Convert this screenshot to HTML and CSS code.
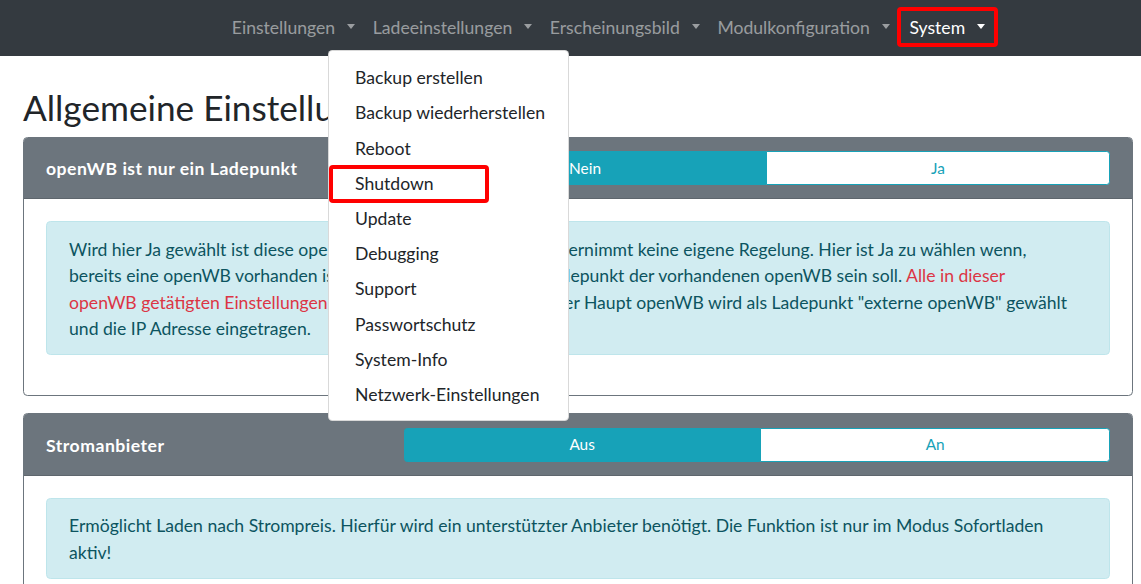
FILE: index.html
```html
<!DOCTYPE html>
<html lang="de">
<head>
<meta charset="utf-8">
<title>openWB Einstellungen</title>
<link rel="stylesheet" href="styles.css">
</head>
<body>
<nav class="navbar">
  <ul class="nav">
    <li class="nav-item"><a class="nav-link">Einstellungen <span class="caret"></span></a></li>
    <li class="nav-item"><a class="nav-link">Ladeeinstellungen <span class="caret"></span></a></li>
    <li class="nav-item"><a class="nav-link">Erscheinungsbild <span class="caret"></span></a></li>
    <li class="nav-item"><a class="nav-link">Modulkonfiguration <span class="caret"></span></a></li>
    <li class="nav-item"><a class="nav-link active">System <span class="caret"></span><span class="mark mark-system"></span></a></li>
  </ul>
  <div class="dropdown-menu">
    <a class="dropdown-item">Backup erstellen</a>
    <a class="dropdown-item">Backup wiederherstellen</a>
    <a class="dropdown-item">Reboot</a>
    <a class="dropdown-item">Shutdown<span class="mark mark-shutdown"></span></a>
    <a class="dropdown-item">Update</a>
    <a class="dropdown-item">Debugging</a>
    <a class="dropdown-item">Support</a>
    <a class="dropdown-item">Passwortschutz</a>
    <a class="dropdown-item">System-Info</a>
    <a class="dropdown-item">Netzwerk-Einstellungen</a>
  </div>
</nav>
<main class="container">
  <h2 class="page-title">Allgemeine Einstellungen</h2>
  <section class="card">
    <div class="card-header">
      <div class="card-title">openWB ist nur ein Ladepunkt</div>
      <div class="btn-group">
        <button class="btn btn-on">Nein</button>
        <button class="btn btn-off">Ja</button>
      </div>
    </div>
    <div class="card-body">
      <div class="alert">Wird hier Ja gewählt ist diese openWB nur ein Ladepunkt und übernimmt keine eigene Regelung. Hier ist Ja zu wählen wenn,<br>bereits eine openWB vorhanden ist und diese nur ein zweiter Ladepunkt der vorhandenen openWB sein soll. <span class="danger">Alle in dieser<br>openWB getätigten Einstellungen werden NICHT beachtet.</span> An der Haupt openWB wird als Ladepunkt "externe openWB" gewählt<br>und die IP Adresse eingetragen.</div>
    </div>
  </section>
  <section class="card">
    <div class="card-header">
      <div class="card-title">Stromanbieter</div>
      <div class="btn-group">
        <button class="btn btn-on">Aus</button>
        <button class="btn btn-off">An</button>
      </div>
    </div>
    <div class="card-body">
      <div class="alert">Ermöglicht Laden nach Strompreis. Hierfür wird ein unterstützter Anbieter benötigt. Die Funktion ist nur im Modus Sofortladen<br>aktiv!</div>
    </div>
  </section>
</main>
</body>
</html>
```
FILE: styles.css
```css
html, body {
  margin: 0;
  padding: 0;
}
body {
  font-family: "Lato", "Noto Sans", sans-serif;
  font-size: 17.6px;
  line-height: 26.4px;
  color: #212529;
  background: #fff;
  overflow: hidden;
}
.navbar {
  position: relative;
  height: 56px;
  background: #343a40;
  display: flex;
  align-items: center;
  z-index: 10;
}
.nav {
  list-style: none;
  margin: 0;
  padding: 0 0 0 223px;
  display: flex;
  align-items: center;
}
.nav-link {
  position: relative;
  display: block;
  padding: 0 8.8px;
  color: rgba(255, 255, 255, 0.5);
  white-space: nowrap;
}
.nav-link.active {
  color: #fff;
  margin-left: 2px;
}
.caret {
  display: inline-block;
  margin-left: 7.5px;
  vertical-align: 4.5px;
  border-top: 5px solid;
  border-left: 4.6px solid transparent;
  border-right: 4.6px solid transparent;
}
.mark {
  position: absolute;
  border: 4px solid #ff0000;
  border-radius: 4px;
  box-sizing: border-box;
  pointer-events: none;
}
.mark-system {
  left: -4px;
  top: -8px;
  width: 101px;
  height: 40px;
}
.mark-shutdown {
  left: 0;
  top: -1px;
  width: 160px;
  height: 38px;
}
.dropdown-menu {
  position: absolute;
  left: 328px;
  top: 50px;
  width: 241px;
  box-sizing: border-box;
  padding: 9.8px 0 7.8px;
  background: #fff;
  border: 1px solid rgba(0, 0, 0, 0.15);
  border-radius: 4.4px;
}
.dropdown-item {
  position: relative;
  display: block;
  padding: 4.4px 26.4px 4.4px 26px;
  color: #212529;
  white-space: nowrap;
}
.container {
  padding: 0 8px 0 23px;
}
.page-title {
  margin: 30px 0 8.8px;
  font-size: 35.2px;
  line-height: 42.2px;
  font-weight: 400;
  white-space: nowrap;
}
.card {
  border: 1px solid #6c757d;
  border-radius: 4.4px;
  margin-bottom: 17.6px;
  overflow: hidden;
}
.card-header {
  display: flex;
  align-items: center;
  background: #6c757d;
  padding: 13.2px 22px;
  border-bottom: 1px solid rgba(0, 0, 0, 0.125);
}
.card-title {
  flex: 0 0 358px;
  padding-top: 3px;
  color: #fff;
  font-weight: 700;
  letter-spacing: 0.5px;
}
.btn-group {
  flex: 1 1 auto;
  display: flex;
}
.btn {
  flex: 1 1 auto;
  font-family: inherit;
  font-size: 15.4px;
  line-height: 23.1px;
  padding: 4.4px 8.8px;
  border: 1px solid #17a2b8;
  margin: 0;
  cursor: pointer;
}
.btn-on {
  background: #17a2b8;
  color: #fff;
  border-radius: 3.3px 0 0 3.3px;
}
.btn-off {
  background: #fff;
  color: #17a2b8;
  border-radius: 0 3.3px 3.3px 0;
}
.card-body {
  padding: 22px;
}
.alert {
  background: #d1ecf1;
  border: 1px solid #bee5eb;
  color: #0c5460;
  border-radius: 4.4px;
  padding: 14.7px 22px 11.7px;
  margin-bottom: 17.6px;
  white-space: nowrap;
}
.danger {
  color: #dc3545;
}
```
